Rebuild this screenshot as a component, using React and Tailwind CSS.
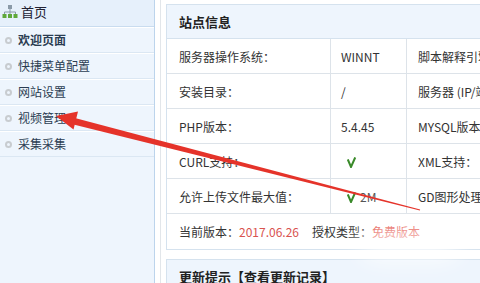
import React from "react";

const menu = [
  { label: "欢迎页面", active: true },
  { label: "快捷菜单配置" },
  { label: "网站设置" },
  { label: "视频管理" },
  { label: "采集采集" },
];

const rows = [
  ["服务器操作系统：", "WINNT", "脚本解释引擎："],
  ["安装目录：", "/", "服务器 (IP/端口)："],
  ["PHP版本：", "5.4.45", "MYSQL版本："],
  ["CURL支持：", "check", "XML支持："],
  ["允许上传文件最大值：", "check2", "GD图形处理库："],
];

function SiteIcon() {
  return (
    <svg width="16" height="16" viewBox="0 0 16 16" className="shrink-0">
      <rect x="6" y="1" width="4" height="4" fill="#8a9aa8" />
      <path d="M8 5v3M2.5 8h11M2.5 8v2M8 8v2M13.5 8v2" stroke="#8a9aa8" strokeWidth="1" fill="none" />
      <rect x="0.5" y="10" width="4" height="4" fill="#5fa83a" />
      <rect x="6" y="10" width="4" height="4" fill="#5fa83a" />
      <rect x="11.5" y="10" width="4" height="4" fill="#5fa83a" />
    </svg>
  );
}

function Check() {
  return (
    <svg width="9" height="11" viewBox="0 0 9 11" className="shrink-0">
      <path d="M0.8 2.5 L4 10 L8.2 0.5" stroke="#3a8a2a" strokeWidth="2" fill="none" />
    </svg>
  );
}

export default function App() {
  return (
    <div
      className="relative flex w-[480px] h-[283px] overflow-hidden bg-white text-[12px] text-[#333]"
      style={{ fontFamily: '"Noto Sans CJK SC", "Noto Sans", sans-serif' }}
    >
      {/* 左侧菜单 */}
      <aside className="w-[155px] shrink-0 bg-[#eef5fd] border-r border-[#bcd4ec] flex flex-col">
        <div className="h-[27px] flex items-center gap-[3px] pl-[2px] pb-[3px] border-b border-[#c9dcef] bg-[#e6f0fb]">
          <SiteIcon />
          <span className="text-[13px] text-[#223]">首页</span>
        </div>
        {menu.map((m) => (
          <div
            key={m.label}
            className="h-[26px] flex items-center gap-[6px] pl-[5px] border-b border-[#dbe7f3] border-t border-t-white"
          >
            <span className="w-[7px] h-[7px] rounded-full border-2 border-[#c8ccd0] shrink-0" />
            <span className={`text-[#2b3d52] ${m.active ? "font-bold" : ""}`}>{m.label}</span>
          </div>
        ))}
      </aside>

      {/* 分隔条 */}
      <div className="w-[6px] shrink-0 border-r border-[#e2e6ea]" />

      {/* 主体 */}
      <main className="flex-1 pl-[5px] pt-[4px] flex flex-col gap-[9px] min-w-0">
        <section className="border border-[#d5e2ee] w-[330px] shrink-0">
          <div className="h-[34px] flex items-center px-[12px] bg-[#eef5fd] border-b border-[#d5e2ee] font-bold text-[13px] text-[#222]">
            站点信息
          </div>
          {rows.map((r) => (
            <div key={r[0]} className="grid grid-cols-[164px_76px_1fr] h-[35px] border-b border-[#dde3e9]">
              <div className="flex items-center pl-[12px] pt-[2px] border-r border-[#dde3e9] whitespace-nowrap">{r[0]}</div>
              <div className="flex items-center pl-[10px] pt-[2px] border-r border-[#dde3e9] whitespace-nowrap">
                {r[1] === "check" ? (
                  <span className="pl-[6px]"><Check /></span>
                ) : r[1] === "check2" ? (
                  <span className="flex items-center gap-[4px] pl-[6px]">
                    <Check />
                    <span className="text-[#555]">2M</span>
                  </span>
                ) : (
                  r[1]
                )}
              </div>
              <div className="flex items-center pl-[11px] pt-[2px] whitespace-nowrap overflow-hidden">{r[2]}</div>
            </div>
          ))}
          <div className="h-[35px] flex items-center pl-[12px] whitespace-nowrap">
            当前版本：<span className="text-[#d9534f]">2017.06.26</span>
            <span className="ml-[13px]">授权类型：</span>
            <span className="text-[#e03a2e]">免费版本</span>
          </div>
        </section>

        <section className="border border-[#d5e2ee] w-[330px] shrink-0">
          <div className="h-[34px] flex items-center px-[12px] bg-[#eef5fd] font-bold text-[13px] text-[#222]">
            更新提示【查看更新记录】
          </div>
        </section>
      </main>

      {/* 水印 */}
      <div className="absolute left-[360px] top-[228px] w-[100px] h-[32px] rounded-full bg-white/80 blur-md pointer-events-none" />

      {/* 红色箭头标注 */}
      <svg className="absolute inset-0 pointer-events-none" width="480" height="283" viewBox="0 0 480 283">
        <polygon points="73,117.5 420.1,209.4 419.9,210.6 71.5,124" fill="#e5332a" />
        <polygon points="56,116 78,111.5 73.5,129.5" fill="#e5332a" />
      </svg>
    </div>
  );
}
